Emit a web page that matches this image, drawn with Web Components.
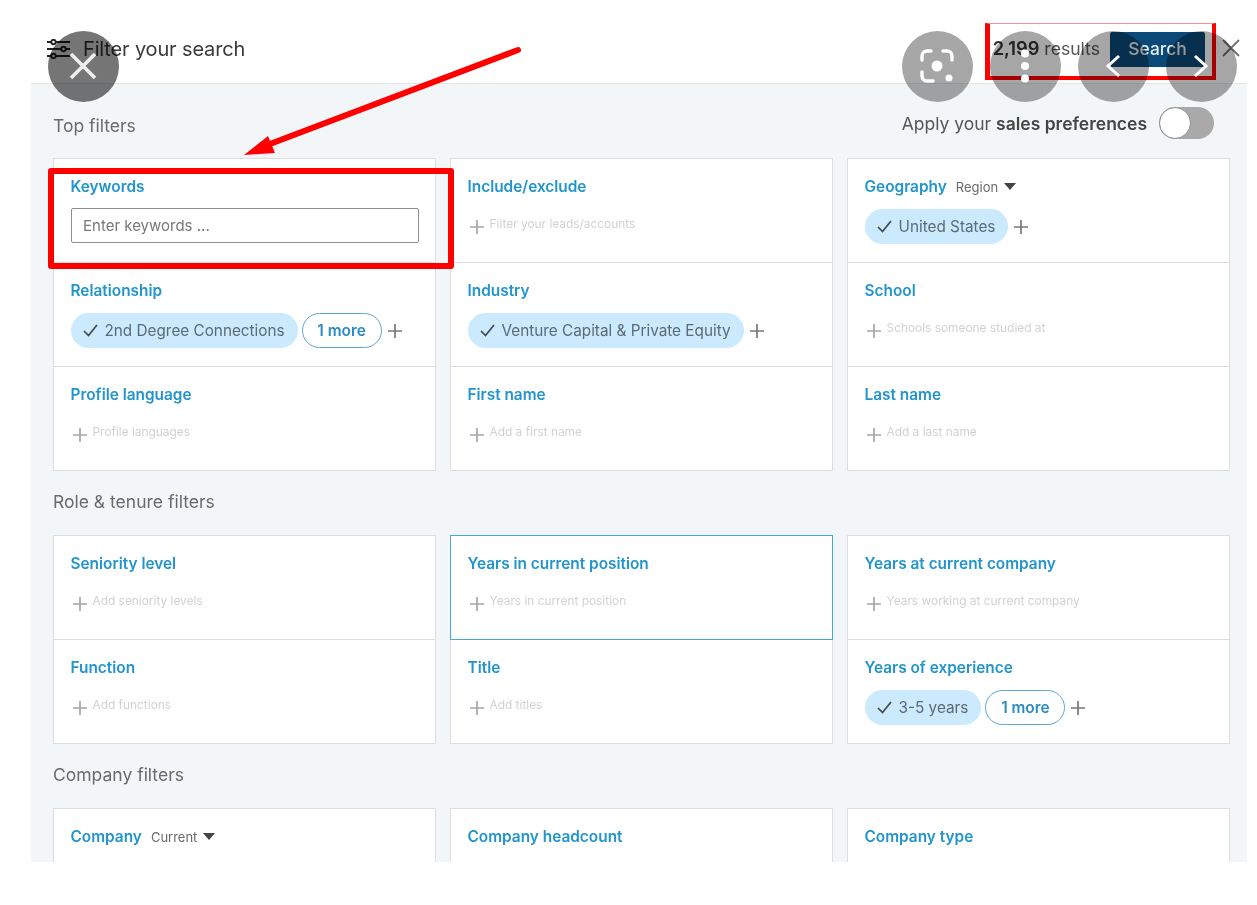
<!doctype html>
<html><head><meta charset="utf-8">
<style>
html,body{margin:0;background:#fff;font-family:Inter,"Liberation Sans",sans-serif}
</style></head><body>
<filter-page>
  <filter-header></filter-header>
  <filter-panel>
    <filter-section title-text="Top filters" prefs>
      <filter-card label="Keywords" input="Enter keywords ..."></filter-card>
      <filter-card label="Include/exclude" hint="Filter your leads/accounts"></filter-card>
      <filter-card label="Geography" sub="Region" chip="United States"></filter-card>
      <filter-card label="Relationship" chip="2nd Degree Connections" more></filter-card>
      <filter-card label="Industry" chip="Venture Capital &amp; Private Equity"></filter-card>
      <filter-card label="School" hint="Schools someone studied at"></filter-card>
      <filter-card label="Profile language" hint="Profile languages"></filter-card>
      <filter-card label="First name" hint="Add a first name"></filter-card>
      <filter-card label="Last name" hint="Add a last name"></filter-card>
    </filter-section>
    <filter-section title-text="Role &amp; tenure filters">
      <filter-card label="Seniority level" hint="Add seniority levels"></filter-card>
      <filter-card label="Years in current position" hint="Years in current position" active></filter-card>
      <filter-card label="Years at current company" hint="Years working at current company"></filter-card>
      <filter-card label="Function" hint="Add functions"></filter-card>
      <filter-card label="Title" hint="Add titles"></filter-card>
      <filter-card label="Years of experience" chip="3-5 years" more></filter-card>
    </filter-section>
    <filter-section title-text="Company filters">
      <filter-card label="Company" sub="Current"></filter-card>
      <filter-card label="Company headcount"></filter-card>
      <filter-card label="Company type"></filter-card>
    </filter-section>
  </filter-panel>
  <annotation-layer></annotation-layer>
</filter-page>
<script>
function el(name, html){
  customElements.define(name, class extends HTMLElement{
    connectedCallback(){
      if(this.shadowRoot) return;
      this.attachShadow({mode:'open'}).innerHTML = typeof html==='function' ? html(this) : html;
    }
  });
}
const esc=s=>String(s).replace(/&/g,'&amp;').replace(/</g,'&lt;');
el('filter-page',`<style>
:host{display:block;position:relative;width:1257px;height:905px;overflow:hidden;filter:blur(.5px)}
.clip{height:862px;overflow:hidden}
</style><div class="clip"><slot></slot></div>`);

el('filter-header',`<style>
:host{display:flex;align-items:center;height:83px;margin-left:31px;width:1216px;box-sizing:border-box;padding:15px 0 0 16px;background:#fff;color:#333}
svg{display:block;flex:none}
h1{font:400 20px/1 Inter,sans-serif;margin:0 0 0 14px;color:#3a3a3a;letter-spacing:-.15px;position:relative;left:-1px}
.sp{flex:1}
.res{font-size:17.6px;color:#555;margin-bottom:2px}
.res b{font-weight:600;color:#333;font-size:18.3px}
button{width:95px;height:35px;border:0;border-radius:2px;background:#0b4a78;color:#e6edf2;font:500 17.4px Inter,sans-serif;margin-left:10px;padding:0 0 2px}
.x{margin:0 6px 2px 16px}
</style>
<svg width="23" height="20" viewBox="0 0 23 20" fill="none" stroke="#222" stroke-width="1.9"><path d="M0 3h4M9 3h14M0 10h14M19 10h4M0 17h4M9 17h14"/><circle cx="6.5" cy="3" r="2.2"/><circle cx="16.5" cy="10" r="2.2"/><circle cx="6.5" cy="17" r="2.2"/></svg>
<h1>Filter your search</h1><span class="sp"></span>
<span class="res"><b>2,199</b> results</span><button>Search</button>
<svg class="x" width="20" height="20" viewBox="0 0 20 20" stroke="#6f6f6f" stroke-width="1.8"><path d="M2 2l16 16M18 2L2 18"/></svg>`);

el('filter-panel',`<style>
:host{display:block;margin-left:31px;width:1216px;box-sizing:border-box;background:#f3f6f8;border-top:1px solid #e3e5e7;padding:0 17px 0 22px;height:779px}
</style><slot></slot>`);

el('filter-section',h=>{
 const p=h.hasAttribute('prefs');
 return `<style>
:host{display:block}
.head{display:flex;align-items:center;justify-content:space-between;height:${p?74:63}px;padding:0 16px ${p?0:2}px 0}
h2{font:400 17.5px/1 Inter,sans-serif;color:#6a6a6a;margin:0;${p?'position:relative;top:5px;':''}}
.pref{display:flex;align-items:center;font-size:17.5px;color:#555;position:relative;top:2px}
.pref b{font-weight:600;color:#444;margin-left:.28em}
.tog{width:55px;height:32px;border-radius:16px;background:#a9a9a9;margin-left:12px;box-sizing:border-box;position:relative}
.tog i{position:absolute;left:0;top:0;width:30px;height:30px;border:1px solid #8c8c8c;border-radius:50%;background:#fff}
::slotted(filter-card){margin-bottom:-1px}
.body{display:grid;grid-template-columns:repeat(3,383px);column-gap:14px}
</style>
<div class="head"><h2>${esc(h.getAttribute('title-text'))}</h2>${p?'<span class="pref">Apply your <b>sales preferences</b><span class="tog"><i></i></span></span>':''}</div>
<div class="body"><slot></slot></div>
`});

el('filter-card',h=>{
 const a=n=>h.getAttribute(n);
 const plus=c=>`<svg class="plus" width="14" height="14" viewBox="0 0 14 14" stroke="${c}" stroke-width="1.7"><path d="M7 0v14M0 7h14"/></svg>`;
 let body='';
 if(a('input')!==null) body=`<div class="input">${esc(a('input'))}</div>`;
 else if(a('chip')!==null) body=`<div class="row"><span class="chip"><svg width="15" height="13" viewBox="0 0 15 13" fill="none" stroke="#3f4a50" stroke-width="1.7"><path d="M1 7l4.5 4.5L14 1"/></svg>${esc(a('chip'))}</span>${h.hasAttribute('more')?'<span class="more">1 more</span>':''}${plus('#777')}</div>`;
 else if(a('hint')!==null) body=`<div class="hint">${plus('#a5a5a5')}<span>${esc(a('hint'))}</span></div>`;
 return `<style>
:host{display:block;height:105px;box-sizing:border-box;background:#fff;border:1px solid #dcdee0;padding:18px 0 0 16.5px;position:relative;${h.hasAttribute('active')?'border-color:#4aa8d8;z-index:1;':''}}
.l{display:flex;align-items:center;height:19px;font:600 15.4px/19px Inter,sans-serif;color:#2295cc}
.sub{font:400 13px Inter,sans-serif;color:#6a6a6a;margin-left:9px}
.tri{width:0;height:0;border:6.5px solid transparent;border-top:7px solid #444;border-bottom:0;margin-left:6px}
.input{box-sizing:border-box;width:348px;height:35px;margin-top:12px;margin-left:.5px;border:1px solid #8e8e8e;border-radius:2px;background:#fff;font:400 15px/33px Inter,sans-serif;color:#777;padding-left:11px}
.row{display:flex;align-items:center;margin-top:13px}
.chip{display:flex;align-items:center;height:35px;border-radius:18px;background:#cbeafd;padding:0 13px 0 12px;font:400 15.3px/1 Inter,sans-serif;color:#5b6b75;white-space:nowrap}
.chip svg{margin-right:7px}
.more{display:flex;align-items:center;justify-content:center;box-sizing:border-box;width:80px;height:35px;margin-left:4px;border:1.5px solid #5fa6d0;border-radius:18px;font:600 15.4px/1 Inter,sans-serif;color:#2a8cc0;background:#fff}
.row .plus{margin-left:6px}
.hint{display:flex;align-items:flex-start;margin-top:20.5px;margin-left:2px;font:400 11.9px/14px Inter,sans-serif;color:#cfd2d5;white-space:nowrap}
.hint .plus{margin-top:3.5px;margin-right:6px;flex:none}
.hint svg{display:block}
</style><div class="l">${esc(a('label'))}${a('sub')?`<span class="sub">${esc(a('sub'))}</span><i class="tri"></i>`:''}</div>${body}`;
});

el('annotation-layer',`<style>
:host{display:block;position:absolute;inset:0;pointer-events:none}
.c{position:absolute;width:71px;height:71px;border-radius:50%;background:rgba(0,0,0,.35);top:30.5px;display:flex;align-items:center;justify-content:center}
.c.dark{background:rgba(0,0,0,.54)}
.box{position:absolute;box-sizing:border-box;border:solid #f00}
svg.a{position:absolute;left:0;top:0}
</style>
<svg class="a" width="1257" height="905"><path d="M518 50L262 147" stroke="#f00" stroke-width="6" stroke-linecap="round"/><path d="M244 155L268 136L275 153Z" fill="#f00"/></svg>
<div class="box" style="left:48px;top:168px;width:406px;height:101px;border-width:6px;border-radius:3px"></div>
<div class="box" style="left:985px;top:23px;width:231px;height:57px;border-width:1px 4px 4px 5px;border-top-color:rgba(255,0,0,.45)"></div>
<div class="c dark" style="left:47.5px"><svg width="32" height="32" viewBox="0 0 32 32" stroke="#eee" stroke-width="3.6"><path d="M4 4l24 24M28 4L4 28"/></svg></div>
<div class="c" style="left:901.5px"><svg width="36" height="36" viewBox="0 0 36 36" fill="none" stroke="#fff" stroke-width="3.4" stroke-linecap="round"><path d="M3 12V8a5 5 0 0 1 5-5h4M24 3h4a5 5 0 0 1 5 5v4M3 24v4a5 5 0 0 0 5 5h6"/><circle cx="18" cy="18" r="5.5" fill="#fff" stroke="none"/><circle cx="30" cy="30" r="3.5" fill="#fff" stroke="none"/></svg></div>
<div class="c" style="left:989.5px"><svg width="10" height="36" viewBox="0 0 10 36" fill="#fff"><circle cx="5" cy="5.5" r="4"/><circle cx="5" cy="18" r="4"/><circle cx="5" cy="30.5" r="4"/></svg></div>
<div class="c" style="left:1077.5px"><svg width="18" height="24" viewBox="0 0 18 24" fill="none" stroke="#fff" stroke-width="3"><path d="M15 2L4 12l11 10"/></svg></div>
<div class="c" style="left:1165.5px"><svg width="18" height="24" viewBox="0 0 18 24" fill="none" stroke="#fff" stroke-width="3"><path d="M3 2l11 10L3 22"/></svg></div>
`);
</script></body></html>
